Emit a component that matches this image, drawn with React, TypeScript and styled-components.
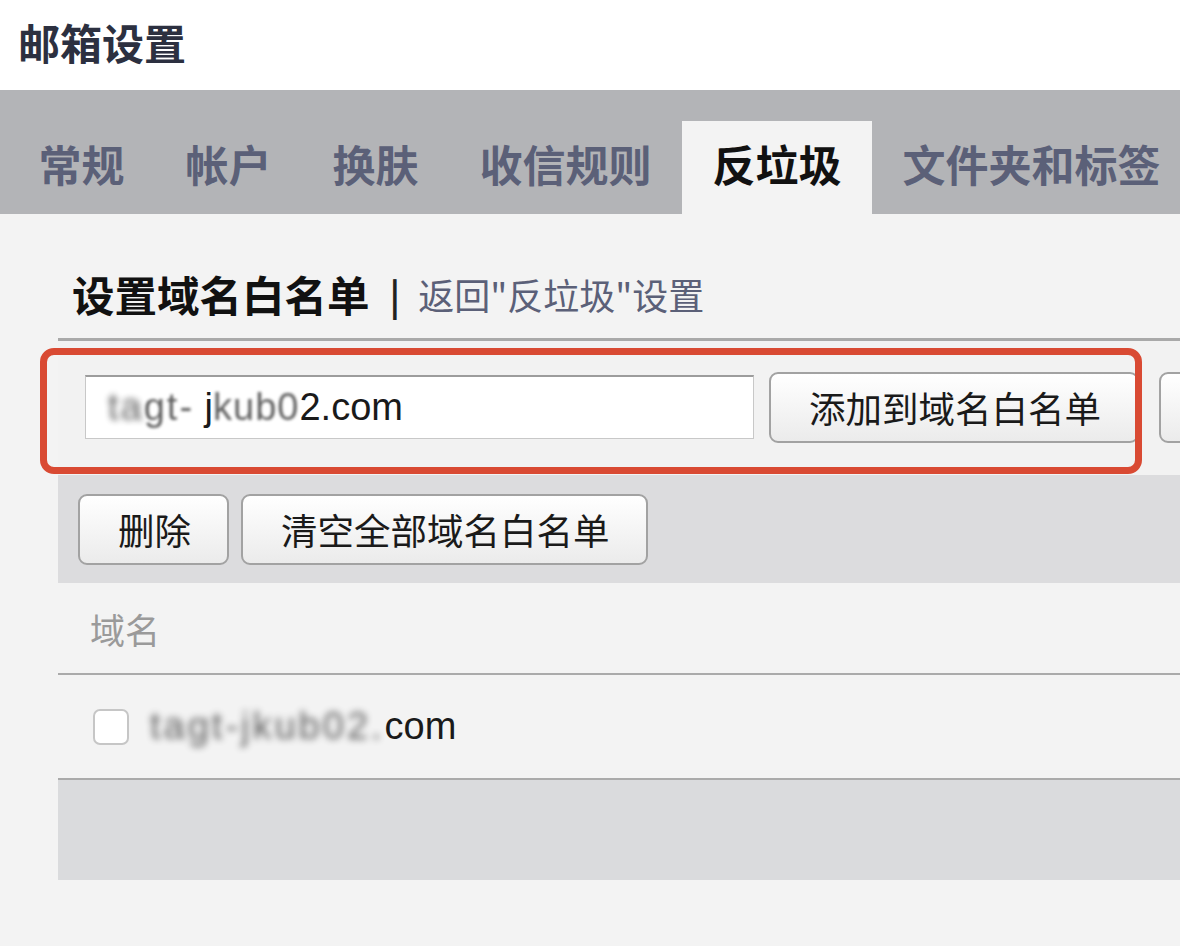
import React from "react";
import styled, { createGlobalStyle } from "styled-components";

const Global = createGlobalStyle`
  html, body { margin: 0; padding: 0; }
  body {
    background: #f3f3f3;
    overflow: hidden;
    font-family: "Liberation Sans", "Noto Sans CJK SC", sans-serif;
    color: #111;
  }
  * { box-sizing: border-box; }
`;

const Page = styled.div`
  width: 1180px;
  height: 946px;
  overflow: hidden;
  background: #f3f3f3;
`;

const TopBar = styled.header`
  height: 90px;
  background: #ffffff;
  padding-left: 18px;
  display: flex;
  align-items: center;
`;

const Title = styled.h1`
  margin: 0 0 8px 0;
  font-family: "Noto Sans CJK SC", sans-serif;
  font-size: 42px;
  font-weight: 700;
  color: #2c3040;
`;

const TabBar = styled.nav`
  height: 124px;
  background: #b3b4b7;
  display: flex;
  align-items: flex-end;
  padding-left: 8px;
  white-space: nowrap;
`;

const Tab = styled.div<{ $active?: boolean }>`
  height: 93px;
  padding: 0 30.5px 10px;
  display: flex;
  align-items: center;
  flex-shrink: 0;
  font-family: "Noto Sans CJK SC", sans-serif;
  font-size: 43px;
  font-weight: 700;
  color: ${(p) => (p.$active ? "#111111" : "#5b6078")};
  background: ${(p) => (p.$active ? "#f3f3f3" : "transparent")};
`;

const Content = styled.main`
  padding-left: 58px;
`;

const Panel = styled.section`
  width: 1260px;
`;

const Heading = styled.div`
  height: 124px;
  padding: 52px 0 0 14px;
  display: flex;
  align-items: flex-start;
  font-family: "Noto Sans CJK SC", sans-serif;
  line-height: 56px;
  white-space: nowrap;
`;

const HeadingTitle = styled.span`
  font-size: 42.5px;
  font-weight: 700;
  color: #111;
`;

const Divider = styled.span`
  font-size: 36px;
  font-weight: 700;
  color: #222;
  margin: 0 18px 0 20px;
`;

const BackLink = styled.a`
  font-size: 36px;
  color: #5b6078;
  text-decoration: none;
`;

const InputRow = styled.div`
  position: relative;
  height: 137px;
  border-top: 3px solid #a9a9a9;
  background: #f2f2f2;
  display: flex;
  align-items: center;
  padding: 0 0 2px 27px;
  gap: 15px;
`;

const Field = styled.div`
  width: 669px;
  height: 64px;
  background: #ffffff;
  border: 1px solid #c8c8c8;
  border-top: 2px solid #9c9c9c;
  display: flex;
  align-items: center;
  padding-left: 22px;
  font-size: 38px;
  color: #1a1a1a;
  white-space: nowrap;
`;

const Blur = styled.span<{ $amount?: number; $spacing?: number }>`
  filter: blur(${(p) => p.$amount ?? 3}px);
  opacity: 0.7;
  letter-spacing: ${(p) => p.$spacing ?? 0}px;
`;

const Button = styled.button`
  height: 71px;
  padding: 0 36px 0 38px;
  border: 2px solid #a2a2a2;
  border-radius: 9px;
  background: linear-gradient(#ffffff, #ebebeb);
  font-family: "Noto Sans CJK SC", sans-serif;
  font-size: 36.5px;
  color: #1a1a1a;
  white-space: nowrap;
  flex-shrink: 0;
  cursor: pointer;
`;

const CutButton = styled(Button)`
  margin-left: 5px;
  width: 120px;
`;

const Annotation = styled.div`
  position: absolute;
  left: -18px;
  top: 7px;
  width: 1102px;
  height: 126px;
  border: 7px solid #d94a33;
  border-radius: 14px;
  pointer-events: none;
`;

const Toolbar = styled.div`
  height: 108px;
  background: #dcdcde;
  display: flex;
  align-items: center;
  padding-left: 20px;
  gap: 12px;
`;

const ListHead = styled.div`
  height: 92px;
  display: flex;
  align-items: center;
  padding-left: 32px;
  border-bottom: 2px solid #aaaaaa;
  font-family: "Noto Sans CJK SC", sans-serif;
  font-size: 35px;
  color: #9a9a9a;
`;

const ListRow = styled.label`
  height: 105px;
  display: flex;
  align-items: center;
  padding-left: 35px;
  gap: 21px;
  border-bottom: 2px solid #aaaaaa;
  font-size: 38px;
  color: #1a1a1a;
  white-space: nowrap;
`;

const Check = styled.span`
  width: 36px;
  height: 36px;
  border: 2px solid #c6c6c6;
  border-radius: 7px;
  background: #ffffff;
  flex-shrink: 0;
`;

const Footer = styled.div`
  height: 100px;
  background: #dadbdd;
`;

const tabs = ["常规", "帐户", "换肤", "收信规则", "反垃圾", "文件夹和标签"];

export default function App() {
  return (
    <Page>
      <Global />
      <TopBar>
        <Title>邮箱设置</Title>
      </TopBar>
      <TabBar>
        {tabs.map((t) => (
          <Tab key={t} $active={t === "反垃圾"}>
            {t}
          </Tab>
        ))}
      </TabBar>
      <Content>
        <Panel>
          <Heading>
            <HeadingTitle>设置域名白名单</HeadingTitle>
            <Divider>|</Divider>
            <BackLink href="#">返回"反垃圾"设置</BackLink>
          </Heading>
          <InputRow>
            <Field role="textbox">
              <Blur $amount={3} $spacing={2}>ta</Blur>
              <Blur $amount={1.5} $spacing={2}>gt-</Blur>
              <span>&nbsp;j</span>
              <Blur $amount={1.5} $spacing={1}>kub0</Blur>
              <span>2.com</span>
            </Field>
            <Button>添加到域名白名单</Button>
            <CutButton aria-label="更多" />
            <Annotation />
          </InputRow>
          <Toolbar>
            <Button>删除</Button>
            <Button>清空全部域名白名单</Button>
          </Toolbar>
          <ListHead>域名</ListHead>
          <ListRow>
            <Check />
            <span>
              <Blur $amount={3.5} $spacing={3}>tagt-jkub02.</Blur>
              com
            </span>
          </ListRow>
          <Footer />
        </Panel>
      </Content>
    </Page>
  );
}
